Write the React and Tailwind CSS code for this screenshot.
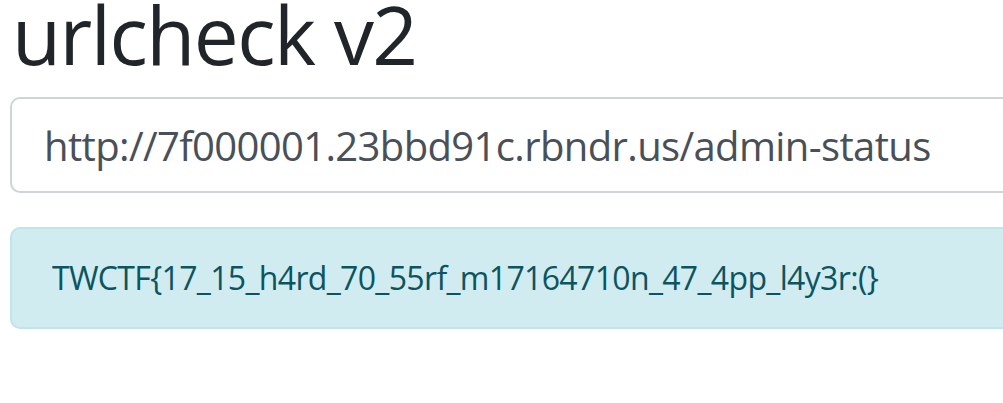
export default function App() {
  return (
    <div className="w-[1003px] h-[403px] overflow-hidden bg-white font-['Open_Sans',sans-serif]">
      <div className="w-[1200px] pl-[10px] pt-[2px]">
        <h1 className="text-[80px] leading-[64px] mb-[31px] font-normal tracking-[-1.5px] text-[#212529] pl-[2px]">
          urlcheck v2
        </h1>
        <input
          type="text"
          readOnly
          value="http://7f000001.23bbd91c.rbndr.us/admin-status"
          className="block w-full h-[96px] px-[32px] text-[40px] tracking-[-0.63px] text-[#495057] bg-white border-2 border-[#ced4da] rounded-[10px] outline-none"
        />
        <div className="mt-[34px] py-[25px] px-[40px] text-[32px] leading-[48px] tracking-[-0.66px] text-[#0c5460] bg-[#d1ecf1] border-2 border-[#bee5eb] rounded-[10px]">
          TWCTF{"{"}17_15_h4rd_70_55rf_m17164710n_47_4pp_l4y3r:({"}"}
        </div>
      </div>
    </div>
  );
}
